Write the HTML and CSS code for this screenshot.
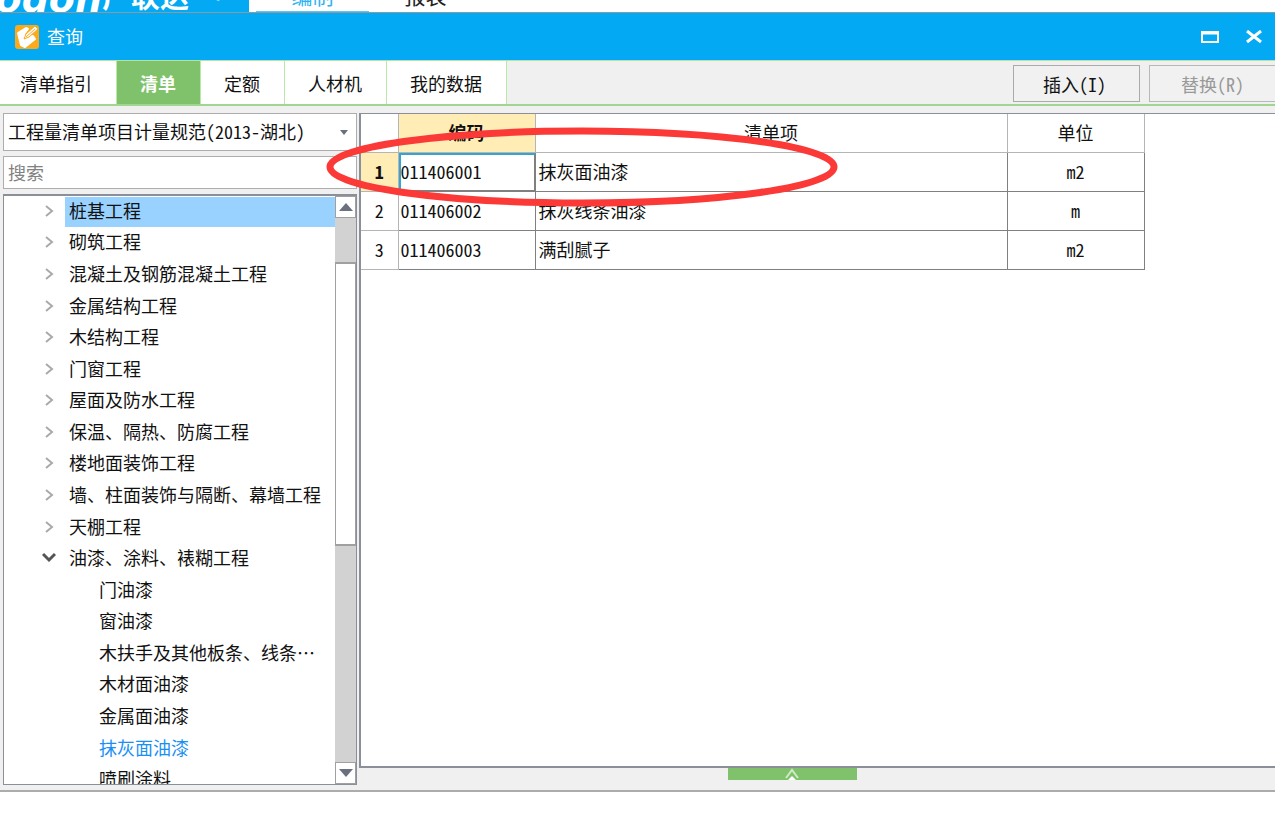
FILE: index.html
```html
<!DOCTYPE html>
<html lang="zh-CN">
<head>
<meta charset="utf-8">
<title>查询</title>
<link rel="stylesheet" href="styles.css">
</head>
<body>
<header class="app-strip">
  <div class="brand"><span class="brand-en">Glodon</span><span class="brand-cn">广联达</span><span class="brand-dot">·</span></div>
  <nav class="app-nav"><a class="app-link current" href="#">编制</a><a class="app-link" href="#">报表</a></nav>
</header>
<main class="dialog">
  <div class="titlebar">
    <svg class="app-icon" viewBox="0 0 24 24" aria-hidden="true">
      <rect width="24" height="24" rx="3" fill="#fbaa1b"/>
      <path d="M3 8l8-5 2 1-4 5 1 3 8-1 2 3-10 8-4-2z" fill="#fff" stroke="#fff" stroke-width="2" stroke-linejoin="round"/>
      <path d="M9 14l2-5 9-8 3 3-9 8z" fill="#fff" stroke="#fbaa1b" stroke-width="1"/>
      <path d="M11 12l9-8" stroke="#fbaa1b" stroke-width="1"/>
    </svg>
    <h1 class="title">查询</h1>
    <button class="win-btn" type="button" aria-label="最大化"><svg viewBox="0 0 18 14"><path d="M1 2h16v10H1z" fill="none" stroke="#fff" stroke-width="2"/><path d="M1 3h16" stroke="#fff" stroke-width="3"/></svg></button>
    <button class="win-btn" type="button" aria-label="关闭"><svg viewBox="0 0 18 14"><path d="M2 1l14 11M16 1L2 12" fill="none" stroke="#fff" stroke-width="3"/></svg></button>
  </div>
  <div class="toolbar">
    <div class="tabs" role="tablist">
      <button class="tab first" type="button" role="tab">清单指引</button>
      <button class="tab active" type="button" role="tab" aria-selected="true">清单</button>
      <button class="tab" type="button" role="tab">定额</button>
      <button class="tab" type="button" role="tab">人材机</button>
      <button class="tab" type="button" role="tab">我的数据</button>
    </div>
    <div class="actions">
      <button class="action" type="button">插入(I)</button>
      <button class="action edge" type="button" disabled>替换(R)</button>
    </div>
  </div>
  <div class="content">
    <aside class="sidebar">
      <div class="combo">
        <select class="combo-select" aria-label="清单规范"><option>工程量清单项目计量规范(2013-湖北)</option></select>
        <svg class="combo-arrow" viewBox="0 0 8 5" aria-hidden="true"><path d="M0 0h8L4 5z" fill="#6b7080"/></svg>
      </div>
      <input class="search" type="text" placeholder="搜索" aria-label="搜索">
      <div class="tree">
        <ul class="tree-list">
          <li class="node selected"><svg class="chev" viewBox="0 0 14 14"><path d="M4 1l6 5-6 5"/></svg><span class="label">桩基工程</span></li>
          <li class="node"><svg class="chev" viewBox="0 0 14 14"><path d="M4 1l6 5-6 5"/></svg><span class="label">砌筑工程</span></li>
          <li class="node"><svg class="chev" viewBox="0 0 14 14"><path d="M4 1l6 5-6 5"/></svg><span class="label">混凝土及钢筋混凝土工程</span></li>
          <li class="node"><svg class="chev" viewBox="0 0 14 14"><path d="M4 1l6 5-6 5"/></svg><span class="label">金属结构工程</span></li>
          <li class="node"><svg class="chev" viewBox="0 0 14 14"><path d="M4 1l6 5-6 5"/></svg><span class="label">木结构工程</span></li>
          <li class="node"><svg class="chev" viewBox="0 0 14 14"><path d="M4 1l6 5-6 5"/></svg><span class="label">门窗工程</span></li>
          <li class="node"><svg class="chev" viewBox="0 0 14 14"><path d="M4 1l6 5-6 5"/></svg><span class="label">屋面及防水工程</span></li>
          <li class="node"><svg class="chev" viewBox="0 0 14 14"><path d="M4 1l6 5-6 5"/></svg><span class="label">保温、隔热、防腐工程</span></li>
          <li class="node"><svg class="chev" viewBox="0 0 14 14"><path d="M4 1l6 5-6 5"/></svg><span class="label">楼地面装饰工程</span></li>
          <li class="node"><svg class="chev" viewBox="0 0 14 14"><path d="M4 1l6 5-6 5"/></svg><span class="label">墙、柱面装饰与隔断、幕墙工程</span></li>
          <li class="node"><svg class="chev" viewBox="0 0 14 14"><path d="M4 1l6 5-6 5"/></svg><span class="label">天棚工程</span></li>
          <li class="node open"><svg class="chev" viewBox="0 0 14 14"><path d="M1 2l6 6 6-6"/></svg><span class="label">油漆、涂料、裱糊工程</span></li>
          <li class="node leaf"><span class="label">门油漆</span></li>
          <li class="node leaf"><span class="label">窗油漆</span></li>
          <li class="node leaf"><span class="label">木扶手及其他板条、线条…</span></li>
          <li class="node leaf"><span class="label">木材面油漆</span></li>
          <li class="node leaf"><span class="label">金属面油漆</span></li>
          <li class="node leaf chosen"><span class="label">抹灰面油漆</span></li>
          <li class="node leaf"><span class="label">喷刷涂料</span></li>
        </ul>
        <div class="scrollbar">
          <button class="scroll-btn" type="button" aria-label="向上滚动"><svg viewBox="0 0 14 8"><path d="M7 0l7 8H0z"/></svg></button>
          <div class="track-top"></div>
          <div class="thumb"></div>
          <div class="track-bottom"></div>
          <button class="scroll-btn" type="button" aria-label="向下滚动"><svg viewBox="0 0 14 8"><path d="M0 0h14L7 8z"/></svg></button>
        </div>
      </div>
    </aside>
    <section class="results">
      <div class="grid-pane">
        <table class="grid">
          <colgroup><col class="c-num"><col class="c-code"><col class="c-name"><col class="c-unit"></colgroup>
          <thead><tr><th></th><th class="hot">编码</th><th>清单项</th><th>单位</th></tr></thead>
          <tbody>
            <tr><th class="hot">1</th><td class="code focus">011406001</td><td>抹灰面油漆</td><td class="unit">m2</td></tr>
            <tr><th>2</th><td class="code">011406002</td><td>抹灰线条油漆</td><td class="unit">m</td></tr>
            <tr><th>3</th><td class="code">011406003</td><td>满刮腻子</td><td class="unit">m2</td></tr>
          </tbody>
        </table>
      </div>
      <div class="drawer-bar"><button class="drawer" type="button" aria-label="展开"><svg viewBox="0 0 14 12"><path d="M1 10L7 2l6 8" fill="none" stroke="#cfeac5" stroke-width="2"/><path d="M3 12l4-4 4 4z" fill="#fff"/></svg></button></div>
      <svg class="marker" viewBox="0 0 512 80" aria-hidden="true"><ellipse cx="256" cy="40" rx="252" ry="36"/></svg>
    </section>
  </div>
</main>
</body>
</html>
```
FILE: styles.css
```css
* { box-sizing: border-box; }
body {
  margin: 0;
  min-height: 100vh;
  display: flex;
  flex-direction: column;
  overflow: hidden;
  background: #fff;
  color: #111;
  font: 18px/24px "Noto Sans Mono CJK SC", "Liberation Serif", "Noto Sans CJK SC", monospace;
}
button, input, select { font: inherit; color: inherit; margin: 0; border-radius: 0; }
button { cursor: pointer; }

/* Host application strip behind the dialog */
.app-strip { display: flex; height: 12px; overflow: hidden; }
.brand {
  flex: 0 0 249px;
  display: flex;
  align-items: flex-end;
  background: #03a9f2;
  color: #fff;
  font-weight: 700;
  white-space: nowrap;
}
.brand-en {
  width: 102px;
  display: flex;
  justify-content: flex-end;
  font: italic 700 38px/26px "DejaVu Sans", sans-serif;
}
.brand-cn { font-size: 29px; line-height: 34px; font-family: "Noto Sans CJK SC", sans-serif; }
.brand-dot { padding-left: 20px; line-height: 30px; }
.app-nav { display: flex; align-items: flex-end; padding-left: 7px; }
.app-link {
  width: 113px;
  text-align: center;
  color: #222;
  text-decoration: none;
  font: 21px/32px "Noto Sans CJK SC", sans-serif;
  border-bottom: 1px solid transparent;
}
.app-link.current { color: #2bb2f2; border-color: #5cc4f2; }

.dialog {
  flex: 1;
  display: flex;
  flex-direction: column;
  margin-bottom: 31px;
  border-top: 1px solid #8f9aa0;
  border-bottom: 2px solid #acacac;
  background: #f0f0f0;
}

.titlebar {
  height: 47px;
  display: flex;
  align-items: center;
  padding: 0 12px 0 15px;
  background: #03a9f2;
  color: #fff;
}
.app-icon { width: 24px; height: 24px; }
.title { flex: 1; margin: 0 0 0 8px; padding-bottom: 2px; font: 18px/24px "Noto Sans CJK SC", sans-serif; }
.win-btn { width: 18px; height: 14px; padding: 0; border: 0; background: none; margin-left: 26px; }
.win-btn svg { display: block; width: 18px; height: 14px; }

.toolbar {
  display: flex;
  justify-content: space-between;
  height: 46px;
  border-top: 1px solid #b5e3a4;
  border-bottom: 2px solid #a0d490;
}
.tabs { display: flex; }
.tab {
  padding: 1px 24px 0 23px;
  border: 0;
  border-right: 1px solid #b9e8a8;
  background: #fff;
}
.tab.first { padding-left: 20px; }
.tab.active { background: #80c26b; color: #fff; font-weight: 700; }
.actions { display: flex; gap: 9px; padding: 4px 0 2px; }
.action {
  width: 127px;
  border: 1px solid #aaa;
  background: #f1f1f1;
  padding: 0 4px 0 0;
}
.action.edge { width: 126px; border-right: 0; border-color: #b8b8b8; padding: 0; }
.action:disabled { color: #999; }

.content { flex: 1; display: flex; gap: 2px; padding: 7px 0 5px 3px; min-height: 0; }

.sidebar { flex: 0 0 354px; display: flex; flex-direction: column; gap: 5px; }
.combo { position: relative; }
.combo-select, .search {
  display: block;
  width: 100%;
  border: 1px solid #adadad;
  background: #fff;
  padding: 0 4px 2px;
  outline: 0;
}
.combo-select { height: 38px; appearance: none; }
.combo-arrow { position: absolute; right: 9px; top: 17px; width: 8px; height: 5px; }
.search { height: 33px; }
.search::placeholder { color: #828282; opacity: 1; }

.tree {
  flex: 1 1 0;
  min-height: 0;
  display: flex;
  overflow: hidden;
  border: 2px solid #8a8f99;
  border-width: 2px 1px;
  border-bottom-width: 1px;
  background: #fff;
}
.tree-list {
  flex: 1;
  margin: 0;
  padding: 0;
  height: 600px;
  display: grid;
  grid-auto-rows: 1fr;
  list-style: none;
}
.node { display: flex; align-items: center; padding-left: 38px; white-space: nowrap; }
.chev { flex: none; width: 14px; height: 14px; margin-right: 9px; fill: none; stroke: #a9a9a9; stroke-width: 2; }
.open .chev { stroke: #555; stroke-width: 3; }
.label { flex: 1; padding: 1px 4px 5px; }
.leaf { padding-left: 91px; }
.selected .label { background: #99d1ff; }
.chosen { color: #1a90f5; }

.scrollbar { flex: 0 0 21px; display: flex; flex-direction: column; background: #d2d2d2; }
.scroll-btn {
  flex: 0 0 22px;
  display: grid;
  place-items: center;
  padding: 0;
  border: 1px solid #a0a0a0;
  background: #fff;
}
.scroll-btn svg { width: 14px; height: 8px; fill: #6b7080; }
.track-top { flex: 44; }
.thumb { flex: 282; border: 1px solid #a0a0a0; border-width: 2px 1px; background: #fff; }
.track-bottom { flex: 218; }

.results { flex: 1; position: relative; display: flex; flex-direction: column; min-width: 0; }
.grid-pane {
  flex: 1;
  border: solid #8a8f99;
  border-width: 1px 0 2px 2px;
  background: #fff;
}
.grid { border-collapse: collapse; table-layout: fixed; width: 783px; }
.c-num { width: 37px; }
.c-code { width: 137px; }
.c-name { width: 472px; }
.c-unit { width: 137px; }
.grid th, .grid td { height: 39px; padding: 0 3px 1px; border: 1px solid #808080; font-weight: 400; text-align: left; }
.grid th { text-align: center; border-color: #b5b5b5; }
.grid th:first-child { border-left: 0; }
.grid thead th { height: 38px; border-top: 0; }
.grid .hot { background: #ffedb5; font-weight: 700; }
.grid .code { padding-left: 2px; }
.grid td.unit { text-align: center; }
.grid .focus { box-shadow: inset 2px 2px #35a5d0, inset -1px -1px #808080; }

.drawer-bar { height: 17px; display: flex; justify-content: center; }
.drawer { width: 129px; height: 12px; margin-right: 50px; padding: 0; border: 0; background: #80c26b; }
.drawer svg { display: block; width: 14px; height: 12px; margin: 0 auto; }

.marker { position: absolute; left: -33px; top: 14px; width: 512px; height: 80px; pointer-events: none; }
.marker ellipse { fill: none; stroke: #fb3a38; stroke-width: 7; }
```
